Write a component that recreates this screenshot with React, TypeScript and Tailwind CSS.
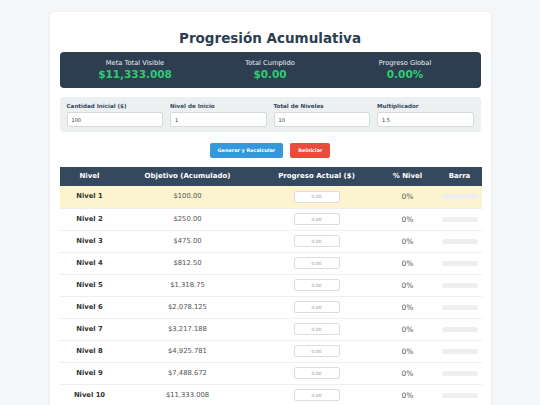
import React from "react";

const levels = [
  { name: "Nivel 1", target: "$100.00" },
  { name: "Nivel 2", target: "$250.00" },
  { name: "Nivel 3", target: "$475.00" },
  { name: "Nivel 4", target: "$812.50" },
  { name: "Nivel 5", target: "$1,318.75" },
  { name: "Nivel 6", target: "$2,078.125" },
  { name: "Nivel 7", target: "$3,217.188" },
  { name: "Nivel 8", target: "$4,925.781" },
  { name: "Nivel 9", target: "$7,488.672" },
  { name: "Nivel 10", target: "$11,333.008" },
];

const stats = [
  { label: "Meta Total Visible", value: "$11,333.008" },
  { label: "Total Cumplido", value: "$0.00" },
  { label: "Progreso Global", value: "0.00%" },
];

const fields = [
  { label: "Cantidad Inicial ($)", value: "100" },
  { label: "Nivel de Inicio", value: "1" },
  { label: "Total de Niveles", value: "10" },
  { label: "Multiplicador", value: "1.5" },
];

export default function App() {
  return (
    <div
      className="min-h-screen bg-[#f4f6f7] pt-3"
      style={{ fontFamily: '"DejaVu Sans", Verdana, sans-serif' }}
    >
      <div className="mx-auto w-[441px] rounded-[5px] bg-white px-[10px] pt-[18px] pb-4 shadow-[0_1px_4px_rgba(0,0,0,0.06)]">
        <h1 className="mb-[6px] text-center text-[13.5px] font-bold leading-[16px] text-[#2c3e50]">
          Progresión Acumulativa
        </h1>

        <div className="flex rounded-[4px] bg-[#2c3e50] px-2 py-[7px]">
          {stats.map((s) => (
            <div key={s.label} className="flex flex-1 flex-col items-center">
              <span className="text-[6.7px] leading-[9px] text-[#ecf0f1]">
                {s.label}
              </span>
              <span className="text-[10.5px] font-bold leading-[13px] text-[#2ecc71]">
                {s.value}
              </span>
            </div>
          ))}
        </div>

        <div className="mt-[9px] grid grid-cols-4 gap-[7px] rounded-[4px] bg-[#ecf0f1] px-[7px] pt-[6px] pb-[5px]">
          {fields.map((f) => (
            <div key={f.label} className="flex flex-col">
              <label className="mb-[2px] text-[5.6px] font-bold leading-[7px] text-[#34495e]">
                {f.label}
              </label>
              <input
                defaultValue={f.value}
                className="h-[15px] w-full rounded-[2px] border border-[#d5dbdb] bg-white px-[4px] text-[5px] text-[#333] outline-none"
              />
            </div>
          ))}
        </div>

        <div className="mt-[11px] flex justify-center gap-[7px]">
          <button className="h-[15px] rounded-[2px] bg-[#3498db] px-[8px] text-[4.9px] font-bold text-white">
            Generar y Recalcular
          </button>
          <button className="h-[15px] rounded-[2px] bg-[#e74c3c] px-[8px] text-[4.9px] font-bold text-white">
            Reiniciar
          </button>
        </div>

        <table className="mt-[9px] w-full table-fixed border-collapse">
          <thead>
            <tr className="h-[19px] bg-[#34495e] text-[7px] font-bold leading-[9px] text-white">
              <th className="w-[60px] font-bold">Nivel</th>
              <th className="w-[136px] font-bold">Objetivo (Acumulado)</th>
              <th className="w-[122px] font-bold">Progreso Actual ($)</th>
              <th className="w-[60px] font-bold">% Nivel</th>
              <th className="w-[44px] font-bold">Barra</th>
            </tr>
          </thead>
          <tbody>
            {levels.map((l, i) => (
              <tr
                key={l.name}
                className={`h-[22px] border-b border-[#eeeeee] text-[6.8px] leading-[9px] ${
                  i === 0 ? "bg-[#fcf3cf]" : "bg-white"
                }`}
              >
                <td className="text-center font-bold text-[#333]">{l.name}</td>
                <td className="text-center text-[#555]">{l.target}</td>
                <td>
                  <input
                    placeholder="0.00"
                    className="mx-auto block h-[12px] w-[46px] rounded-[2px] border border-[#dddddd] bg-white text-center text-[4.5px] text-[#333] outline-none placeholder:text-[#999]"
                  />
                </td>
                <td className="text-center text-[7.5px] text-[#555]">0%</td>
                <td className="px-[4px]">
                  <div className="h-[5px] w-full rounded-full bg-[#eeeeee]" />
                </td>
              </tr>
            ))}
          </tbody>
        </table>
      </div>
    </div>
  );
}
